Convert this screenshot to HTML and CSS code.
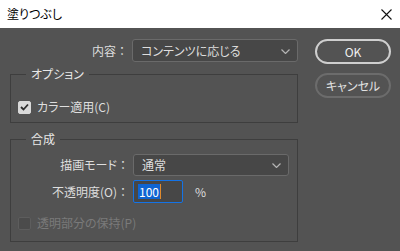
FILE: index.html
```html
<!DOCTYPE html>
<html lang="ja">
<head>
    <meta charset="UTF-8">
    <meta name="viewport" content="width=device-width, initial-scale=1.0">
    <title>塗りつぶし</title>
    <link rel="stylesheet" href="styles.css">
</head>
<body>

<div class="dialog">
    <div class="titlebar">
        <span class="title">塗りつぶし</span>
        <svg class="close" width="11" height="11" viewBox="0 0 11 11">
            <path d="M0.5 0.5 L10.5 10.5 M10.5 0.5 L0.5 10.5" stroke="#111" stroke-width="1.1" fill="none"/>
        </svg>
    </div>

    <div class="body">
        <div class="left">
            <div class="row top-row">
                <span class="label">内容<span class="colon">：</span></span>
                <div class="select wide">
                    <span>コンテンツに応じる</span>
                    <svg class="chev" width="9" height="5" viewBox="0 0 9 5"><path d="M0.5 0.5 L4.5 4.5 L8.5 0.5" stroke="#b5b5b5" stroke-width="1.2" fill="none"/></svg>
                </div>
            </div>

            <fieldset class="group options">
                <legend>オプション</legend>
                <div class="check-row">
                    <span class="box checked">
                        <svg width="9" height="8" viewBox="0 0 9 8"><path d="M1 4 L3.5 6.5 L8 1.5" stroke="#2d2d2d" stroke-width="1.8" fill="none"/></svg>
                    </span>
                    <span>カラー適用<span class="key">(C)</span></span>
                </div>
            </fieldset>

            <fieldset class="group blend">
                <legend>合成</legend>
                <div class="row mode-row">
                    <span class="label">描画モード<span class="colon">：</span></span>
                    <div class="select narrow">
                        <span>通常</span>
                        <svg class="chev" width="9" height="5" viewBox="0 0 9 5"><path d="M0.5 0.5 L4.5 4.5 L8.5 0.5" stroke="#b5b5b5" stroke-width="1.2" fill="none"/></svg>
                    </div>
                </div>
                <div class="row opacity-row">
                    <span class="label">不透明度<span class="key">(O)</span><span class="colon">：</span></span>
                    <div class="field"><span class="sel">100</span><span class="caret"></span></div>
                    <span class="pct">%</span>
                </div>
                <div class="check-row disabled">
                    <span class="box"></span>
                    <span>透明部分の保持(P)</span>
                </div>
            </fieldset>
        </div>

        <div class="buttons">
            <button class="btn primary">OK</button>
            <button class="btn">キャンセル</button>
        </div>
    </div>
</div>

</body>
</html>
```

FILE: styles.css
```css
html, body {
    margin: 0;
    padding: 0;
}
body {
    width: 400px;
    height: 251px;
    overflow: hidden;
    background-color: #535353;
    font-family: "Noto Sans CJK JP", "Noto Sans", sans-serif;
    font-size: 12px;
    line-height: 16px;
    color: #dedede;
}
.titlebar {
    height: 28px;
    background-color: #ffffff;
    display: flex;
    align-items: center;
    justify-content: space-between;
    padding: 0 8px 0 7px;
}
.title {
    color: #000;
    font-size: 12px;
    font-feature-settings: "palt";
}
.close {
    margin-top: 1px;
}
.body {
    display: flex;
    padding: 11px 0 0 10px;
}
.left {
    width: 288px;
}
.row {
    display: flex;
    align-items: center;
}
.label {
    width: 118px;
    text-align: right;
    margin-right: 4px;
    font-feature-settings: "palt";
}
.colon {
    font-feature-settings: normal;
}
.top-row .label {
    width: 118px;
    margin-right: 4px;
}
.select {
    box-sizing: border-box;
    height: 23px;
    border: 1px solid #6a6a6a;
    border-radius: 3px;
    background-color: #474747;
    display: flex;
    align-items: center;
    justify-content: space-between;
    padding: 0 7px 0 8px;
    font-feature-settings: "palt";
}
.select.wide {
    width: 166px;
}
.select.narrow {
    width: 156px;
    height: 22px;
}
.chev {
    margin-top: 1px;
}
.group {
    margin: 0;
    padding: 0;
    border: 1px solid #3e3e3e;
    min-width: 0;
}
.group legend {
    margin-left: 15px;
    padding: 0 5px;
    font-size: 12px;
    line-height: 16px;
    color: #e8e8e8;
    font-feature-settings: "palt";
}
.options {
    margin-top: 4px;
    padding-bottom: 7px;
}
.check-row {
    display: flex;
    align-items: center;
    gap: 6px;
    padding-left: 7px;
    height: 16px;
    font-feature-settings: "palt";
}
.options .check-row {
    margin-top: 17px;
}
.box {
    box-sizing: border-box;
    width: 13px;
    height: 13px;
    border-radius: 2px;
    display: flex;
    align-items: center;
    justify-content: center;
    background-color: #4b4b4b;
    border: 1px solid #5d5d5d;
}
.box.checked {
    background-color: #d9d9d9;
    border-color: #d9d9d9;
}
.key {
    color: #dedede;
}
.blend {
    margin-top: 8px;
    padding-bottom: 10px;
}
.mode-row {
    margin-top: 7px;
}
.opacity-row {
    margin-top: 4px;
}
.field {
    box-sizing: border-box;
    width: 50px;
    height: 23px;
    border: 1px solid #1473e6;
    border-radius: 2px;
    background-color: #474747;
    display: flex;
    align-items: center;
    padding-left: 4px;
}
.sel {
    background-color: #0f64d2;
    color: #fff;
    line-height: 15px;
    padding: 0 1px;
}
.caret {
    width: 1px;
    height: 15px;
    background-color: #e08a2c;
}
.pct {
    margin-left: 12px;
}
.disabled {
    color: #7a7a7a;
    margin-top: 12px;
}
.buttons {
    margin-left: 17px;
    display: flex;
    flex-direction: column;
    gap: 9px;
}
.btn {
    box-sizing: border-box;
    width: 76px;
    height: 25px;
    border-radius: 13px;
    border: 2px solid #6c6c6c;
    background-color: #535353;
    color: #e2e2e2;
    font-family: "Noto Sans CJK JP", "Noto Sans", sans-serif;
    font-size: 12px;
    padding: 0;
    font-feature-settings: "palt";
}
.btn.primary {
    border-color: #cfcfcf;
    color: #f0f0f0;
}
```
